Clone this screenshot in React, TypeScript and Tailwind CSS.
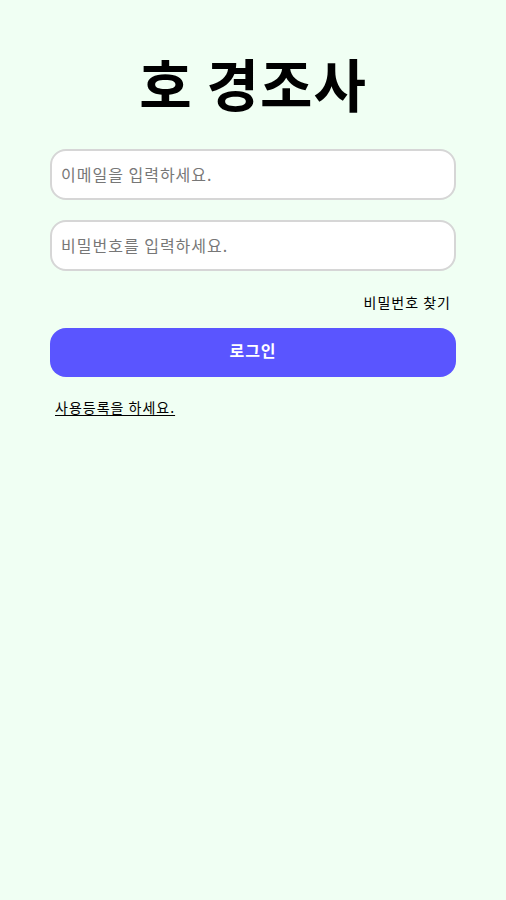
import React from "react";

export default function App() {
  return (
    <div
      className="min-h-[900px] w-full bg-[#f0fff3] px-[50px] pt-[42px]"
      style={{ fontFamily: '"Noto Sans CJK KR", "Noto Sans", sans-serif' }}
    >
      <h1 className="text-center text-[57px] font-bold leading-[80px] text-black tracking-[1px]">
        호 경조사
      </h1>
      <div className="mt-[27px] flex flex-col gap-[20px]">
        <input
          placeholder="이메일을 입력하세요."
          className="h-[51px] w-full rounded-[16px] border-2 border-[#d6d6d6] bg-white px-[9px] pb-[2px] text-[16px] tracking-[1px] text-black placeholder:text-[#777777] outline-none"
        />
        <input
          type="password"
          placeholder="비밀번호를 입력하세요."
          className="h-[51px] w-full rounded-[16px] border-2 border-[#d6d6d6] bg-white px-[9px] pb-[2px] text-[16px] tracking-[1px] text-black placeholder:text-[#777777] outline-none"
        />
      </div>
      <div className="mt-[20px] flex justify-end pr-[5px]">
        <span className="text-[14px] leading-[22px] tracking-[1px] text-black">비밀번호 찾기</span>
      </div>
      <button className="mt-[15px] h-[49px] w-full rounded-[16px] bg-[#5a55ff] pb-[5px] text-[16px] font-bold tracking-[1px] text-white">
        로그인
      </button>
      <div className="mt-[17px] pl-[5px]">
        <span className="text-[14px] leading-[22px] tracking-[1px] text-black underline underline-offset-2">
          사용등록을 하세요.
        </span>
      </div>
    </div>
  );
}
